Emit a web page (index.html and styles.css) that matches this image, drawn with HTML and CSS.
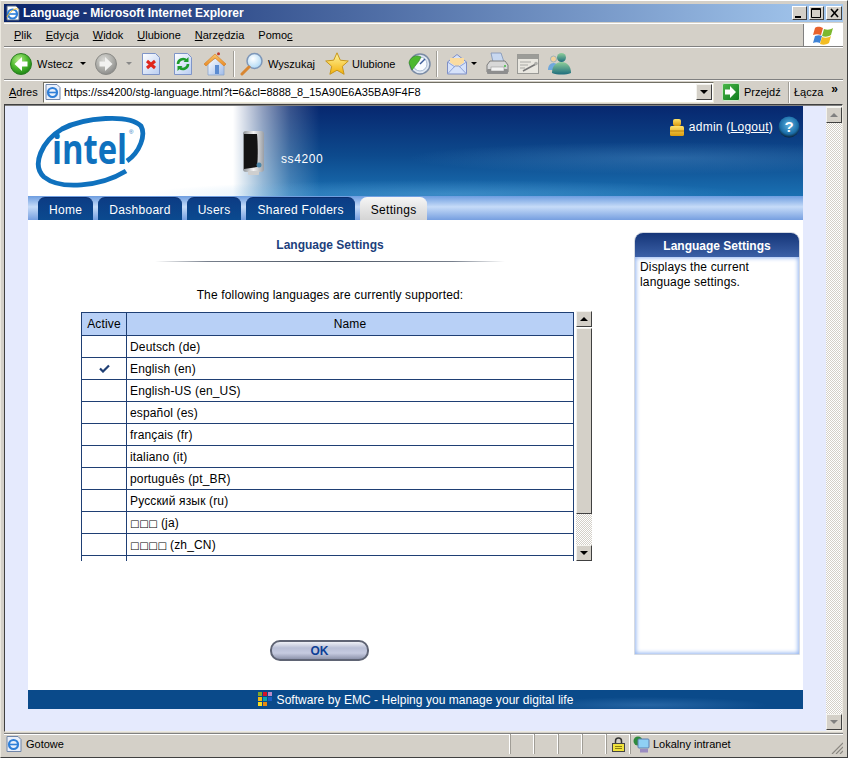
FILE: index.html
```html
<!DOCTYPE html>
<html lang="pl">
<head>
<meta charset="utf-8">
<title>Language - Microsoft Internet Explorer</title>
<link rel="stylesheet" href="styles.css">
</head>
<body>
<svg class="defs" aria-hidden="true">
  <defs>
    <radialGradient id="gGreen" cx=".4" cy=".3" r=".8"><stop offset="0" stop-color="#b6ec8a"/><stop offset=".5" stop-color="#4cb82e"/><stop offset="1" stop-color="#12780f"/></radialGradient>
    <radialGradient id="gGray" cx=".4" cy=".3" r=".8"><stop offset="0" stop-color="#d8d8d4"/><stop offset=".6" stop-color="#a8a8a4"/><stop offset="1" stop-color="#808080"/></radialGradient>
    <linearGradient id="gDoc" x1="0" y1="0" x2="1" y2="1"><stop offset="0" stop-color="#fff"/><stop offset="1" stop-color="#b9cdf2"/></linearGradient>
    <linearGradient id="gStar" x1="0" y1="0" x2="0" y2="1"><stop offset="0" stop-color="#fff6a0"/><stop offset="1" stop-color="#f3b10c"/></linearGradient>
    <linearGradient id="gRoof" x1="0" y1="0" x2="0" y2="1"><stop offset="0" stop-color="#f8c56c"/><stop offset="1" stop-color="#e98a25"/></linearGradient>
    <linearGradient id="gWall" x1="0" y1="0" x2="1" y2="1"><stop offset="0" stop-color="#fff"/><stop offset="1" stop-color="#9fbbe8"/></linearGradient>
    <radialGradient id="gLens" cx=".4" cy=".35" r=".7"><stop offset="0" stop-color="#fff"/><stop offset="1" stop-color="#a9d6f5"/></radialGradient>
    <radialGradient id="gHelp" cx=".5" cy=".4" r=".6"><stop offset="0" stop-color="#5fb4e2"/><stop offset=".72" stop-color="#1b6ea8"/><stop offset="1" stop-color="#0a2238"/></radialGradient>
    <linearGradient id="gGold" x1="0" y1="0" x2="0" y2="1"><stop offset="0" stop-color="#ffe36a"/><stop offset="1" stop-color="#d99a0c"/></linearGradient>
    <linearGradient id="gTeal" x1="0" y1="0" x2="0" y2="1"><stop offset="0" stop-color="#8fcf9a"/><stop offset="1" stop-color="#1e6d7d"/></linearGradient>
    <linearGradient id="gSilver" x1="0" y1="0" x2="1" y2="0"><stop offset="0" stop-color="#8a8f94"/><stop offset=".5" stop-color="#f4f4f4"/><stop offset="1" stop-color="#9a9ea4"/></linearGradient>
    <linearGradient id="gGo" x1="0" y1="0" x2="1" y2="1"><stop offset="0" stop-color="#4cb848"/><stop offset="1" stop-color="#0d7a1e"/></linearGradient>
  </defs>
</svg>

<div class="window">
  <div class="titlebar">
    <svg class="title-ie" viewBox="0 0 16 16" width="16" height="16"><path d="M2 1h9l3 3v11H2z" fill="#fff" stroke="#5a6a80"/><circle cx="7.500" cy="9" r="4.500" fill="none" stroke="#2f7fd8" stroke-width="2.200"/><path d="M4 9h7" stroke="#2f7fd8" stroke-width="1.600"/><path d="M2 12c3-6 8-9 11-8" fill="none" stroke="#f0b92e" stroke-width="1"/></svg>
    <span class="title-text">Language - Microsoft Internet Explorer</span>
    <div class="winbtns">
      <span class="winbtn"><svg viewBox="0 0 15 14" width="15" height="14"><rect x="3" y="10" width="6" height="2" fill="#000"/></svg></span>
      <span class="winbtn"><svg viewBox="0 0 15 14" width="15" height="14"><path d="M2.500 2.500h9V11.500h-9zM2.500 3.500h9" fill="none" stroke="#000"/></svg></span>
      <span class="winbtn winbtn-close"><svg viewBox="0 0 15 14" width="15" height="14"><path d="M4 3l7 8M11 3l-7 8" stroke="#000" stroke-width="1.600"/></svg></span>
    </div>
  </div>

  <div class="menubar">
    <nav class="menu">
      <span><u>P</u>lik</span><span><u>E</u>dycja</span><span><u>W</u>idok</span><span><u>U</u>lubione</span><span><u>N</u>arzędzia</span><span>Pomo<u>c</u></span>
    </nav>
    <div class="flagbox">
      <svg viewBox="0 0 22 20" width="22" height="20"><path d="M2 3c3-2 5-1 8 0l-2 7c-3-1-5-1-8 0z" fill="#e8622c"/><path d="M11 4c3 1 6 1 9-1l-2 7c-3 2-6 2-9 1z" fill="#7cb82e"/><path d="M0 11c3-1 5-1 7 0l-2 7c-2-1-5-1-7 0z" fill="#3f83d6" transform="translate(2 0)"/><path d="M9 12c3 1 6 1 9-1l-2 7c-3 2-6 2-9 1z" fill="#f3bd24"/></svg>
    </div>
  </div>

  <div class="toolbar">
    <svg class="ic22" viewBox="0 0 22 22"><circle cx="11" cy="11" r="10.500" fill="url(#gGreen)" stroke="#2b7d22"/><path d="M12 4L4.500 11l7.500 7v-4.500h5.500v-5H12z" fill="#fff"/></svg>
    <span class="tlabel ml5">Wstecz</span>
    <span class="caret ml7"></span>
    <svg class="ic22 ml9" viewBox="0 0 22 22"><circle cx="11" cy="11" r="10.500" fill="url(#gGray)" stroke="#8a8a86"/><path d="M10 4l7.500 7-7.500 7v-4.500H4.500v-5H10z" fill="#f2f2f0"/></svg>
    <span class="caret caret-off ml9"></span>
    <svg class="ic22 ml8" viewBox="0 0 22 22"><path d="M2.500 .5h13l4 4v17h-17z" fill="url(#gDoc)" stroke="#7f95c8"/><path d="M7 8l8 7M15 8l-8 7" stroke="#e0261c" stroke-width="3"/></svg>
    <svg class="ic22 ml10" viewBox="0 0 22 22"><path d="M2.500 .5h13l4 4v17h-17z" fill="url(#gDoc)" stroke="#7f95c8"/><path d="M6 11a5 5 0 0 1 8.500-3.500M16 11a5 5 0 0 1-8.500 3.500" fill="none" stroke="#1e9c2c" stroke-width="2.600"/><path d="M16.500 4v5h-5zM5.500 18v-5h5z" fill="#1e9c2c"/></svg>
    <svg class="ic24 ml9" viewBox="0 0 24 24"><path d="M5 11l8-5 8 5v12H5z" fill="url(#gWall)" stroke="#8aa4cc" stroke-width=".8"/><path d="M12 20v-7h4v9h-4z" fill="#5b8bd0"/><path d="M1 12L12 2l11 10-2 2-9-8-9 8z" fill="url(#gRoof)" stroke="#d27a20" stroke-width=".6"/><circle cx="15.500" cy="1.800" r="1.500" fill="#c0392b"/></svg>
    <span class="tsep ml6"></span>
    <svg class="ic24 ml5" viewBox="0 0 24 24"><circle cx="14.500" cy="9" r="7.500" fill="url(#gLens)" stroke="#7d96b8" stroke-width="1.500"/><path d="M9 15l-7 7" stroke="#d88632" stroke-width="3" stroke-linecap="round"/></svg>
    <span class="tlabel ml4">Wyszukaj</span>
    <svg class="ic24 ml10" viewBox="0 0 24 24"><path d="M12 .8l3.300 7.400 8 .8-6 5.300 1.800 8L12 18.200l-7.100 4.100 1.800-8-6-5.300 8-.8z" fill="url(#gStar)" stroke="#c7961c"/></svg>
    <span class="tlabel ml3">Ulubione</span>
    <svg class="ic24 ml12" viewBox="0 0 24 24"><circle cx="13" cy="12" r="10" fill="#dfe7f2" stroke="#7a8ba5" stroke-width="1.500"/><circle cx="13" cy="12" r="7" fill="#f8fbff" stroke="#a6b8d0"/><path d="M13 12l5-5" stroke="#3d5d99" stroke-width="1.500"/><path d="M2 11a8 8 0 0 1 12-6l-2 4-7 9z" fill="#4cb82e" stroke="#2b7d22" stroke-width=".6"/></svg>
    <span class="tsep ml5"></span>
    <svg class="ic22 ml8" viewBox="0 0 22 22"><path d="M1.500 9L11 1.500 20.500 9v12h-19z" fill="#d6e2fa" stroke="#7f8fc4"/><path d="M4 9.500V5h14v4.500L11 14z" fill="#fbdca0"/><path d="M1.500 21L9 13h4l7.500 8M1.500 9L9 14M20.500 9L13 14" fill="none" stroke="#8fa2d6"/></svg>
    <span class="caret ml3"></span>
    <svg class="ic24 ml8" viewBox="0 0 24 24"><path d="M6 1h10l3 9H8z" fill="#c8d8f0" stroke="#7f93b5" stroke-width=".8"/><path d="M2 13l3-4h15l3 4v7H2z" fill="#d8d8d8" stroke="#7d7d7d"/><rect x="2" y="17" width="21" height="5" rx="1" fill="#8e8e8e"/><rect x="6" y="15" width="13" height="4" fill="#f3f3f3" stroke="#8a8a8a" stroke-width=".5"/><circle cx="20" cy="14" r="1" fill="#3fbf3f"/></svg>
    <svg class="ic22 ml8" viewBox="0 0 22 22"><rect x=".5" y="1.500" width="21" height="19" fill="#e9e7e0" stroke="#9a9a96"/><rect x="1" y="2" width="20" height="4" fill="#9c9c98"/><path d="M3 9h11M3 12h8M3 15h5" stroke="#a8a8a4"/><path d="M6 18L19 11" stroke="#777" stroke-width="1.500"/><circle cx="19" cy="10.500" r="1.800" fill="#b0b0ac"/></svg>
    <svg class="ic24 ml8" viewBox="0 0 24 24"><circle cx="6.500" cy="7" r="3" fill="#f2d09c" stroke="#6f9fc0" stroke-width=".6"/><path d="M1 18c0-4 2-7 5.500-7s5 3 5 7z" fill="#6fa8dc"/><circle cx="14.500" cy="5.500" r="4.500" fill="url(#gTeal)"/><path d="M5 21c0-7 4-11 9.500-11S24 14 24 21c-5 2-14 2-19 0z" fill="url(#gTeal)"/></svg>
  </div>

  <div class="addressbar">
    <span class="addr-label"><u>A</u>dres</span>
    <div class="addr-box">
      <svg class="addr-ie" viewBox="0 0 16 16" width="16" height="16"><path d="M1 .5h11l3 3v12H1z" fill="#eaf0fb" stroke="#6f85a8"/><circle cx="7.500" cy="8.500" r="4.500" fill="none" stroke="#2f7fd8" stroke-width="2.200"/><path d="M4 8.500h7" stroke="#2f7fd8" stroke-width="1.600"/></svg>
      <span class="addr-url">https://ss4200/stg-language.html?t=6&amp;cl=8888_8_15A90E6A35BA9F4F8</span>
      <span class="sbtn addr-drop"><i class="arr-down"></i></span>
    </div>
    <svg class="go" viewBox="0 0 18 18" width="18" height="18"><rect x=".5" y=".5" width="17" height="17" rx="1.500" fill="url(#gGo)" stroke="#c8e6c4"/><path d="M8 3l6 6-6 6v-3.500H3v-5h5z" fill="#fff"/></svg>
    <span class="go-label">Przejdź</span>
    <span class="addr-sep"></span>
    <span class="links">Łącza</span>
    <span class="chev">»</span>
  </div>

  <div class="viewport">
    <div class="pagearea">
      <div class="page">
        <header class="hdr">
          <svg class="logo" viewBox="0 0 114 76" width="114" height="76">
            <path d="M92 57C66 73 26 76 10 63-3 51 8 27 28 15 51 3 95 0 107 12c5 9-1 26-14 35" fill="none" stroke="#0f71be" stroke-width="4.800"/>
            <text class="logo-text" transform="translate(18 50) scale(.78 1)">intel</text>
            <text class="logo-r" x="95" y="20">®</text>
          </svg>
          <svg class="device" viewBox="0 0 24 46" width="24" height="46"><rect x="1" y="1" width="21" height="41" rx="3" fill="url(#gSilver)"/><path d="M2 4h13c1 10 1 25 0 33l-13 2z" fill="#141414"/><circle cx="17" cy="35" r="2.500" fill="#4c86a8"/><rect x="6" y="41" width="11" height="4" rx="1" fill="#cfcfcf"/></svg>
          <span class="model">ss4200</span>
          <div class="user">
            <svg viewBox="0 0 14 17" width="14" height="17"><rect x="3" y="0" width="8" height="7" rx="2" fill="url(#gGold)"/><rect x="0" y="7" width="14" height="10" rx="1.500" fill="url(#gGold)"/><path d="M0 12h14" stroke="#b77d08"/></svg>
            <span class="user-text">admin (<u>Logout</u>)</span>
            <svg viewBox="0 0 22 22" width="22" height="22"><circle cx="11" cy="11" r="10.500" fill="url(#gHelp)"/><text class="help-q" x="11" y="16">?</text></svg>
          </div>
        </header>
        <nav class="tabs">
          <span class="tab">Home</span>
          <span class="tab">Dashboard</span>
          <span class="tab">Users</span>
          <span class="tab">Shared Folders</span>
          <span class="tab tab-active">Settings</span>
        </nav>
        <main class="main">
          <section class="content">
            <h1 class="heading">Language Settings</h1>
            <div class="rule"></div>
            <p class="intro">The following languages are currently supported:</p>
            <div class="listwrap">
              <div class="tableclip">
                <table class="langs">
                  <thead><tr><th class="col-a">Active</th><th>Name</th></tr></thead>
                  <tbody>
                    <tr><td></td><td>Deutsch (de)</td></tr>
                    <tr><td class="check"><svg viewBox="0 0 11 9" width="11" height="9"><path d="M1 4.500l3 3 6-6" fill="none" stroke="#1f3f74" stroke-width="2.200"/></svg></td><td>English (en)</td></tr>
                    <tr><td></td><td>English-US (en_US)</td></tr>
                    <tr><td></td><td>español (es)</td></tr>
                    <tr><td></td><td>français (fr)</td></tr>
                    <tr><td></td><td>italiano (it)</td></tr>
                    <tr><td></td><td>português (pt_BR)</td></tr>
                    <tr><td></td><td>Русский язык (ru)</td></tr>
                    <tr><td></td><td><span class="tofu">□□□</span> (ja)</td></tr>
                    <tr><td></td><td><span class="tofu">□□□□</span> (zh_CN)</td></tr>
                    <tr><td></td><td></td></tr>
                  </tbody>
                </table>
              </div>
              <div class="vscroll">
                <span class="sbtn"><i class="arr-up"></i></span>
                <span class="thumb"></span>
                <span class="track"></span>
                <span class="sbtn"><i class="arr-down"></i></span>
              </div>
            </div>
            <button class="okbtn" type="button">OK</button>
          </section>
          <aside class="panel">
            <h2 class="panel-head">Language Settings</h2>
            <p class="panel-body">Displays the current language settings.</p>
          </aside>
        </main>
        <footer class="foot">
          <svg viewBox="0 0 15 15" width="15" height="15"><rect x="0" y="0" width="4" height="4" fill="#7fa52a"/><rect x="5" y="0" width="4" height="4" fill="#d8122a"/><rect x="10" y="0" width="4" height="4" fill="#b98bc8"/><rect x="0" y="5" width="4" height="4" fill="#f2b90f"/><rect x="5" y="5" width="4" height="4" fill="#10a6a6"/><rect x="10" y="5" width="4" height="4" fill="#1a5cc0"/><rect x="0" y="10" width="4" height="4" fill="#f8de20"/><rect x="5" y="10" width="4" height="4" fill="#e88a10"/></svg>
          <span>Software by EMC - Helping you manage your digital life</span>
        </footer>
      </div>
    </div>
    <div class="pagescroll">
      <span class="sbtn"><i class="arr-up arr-off"></i></span>
      <span class="track"></span>
      <span class="sbtn"><i class="arr-down arr-off"></i></span>
    </div>
  </div>

  <div class="statusbar">
    <div class="st-main">
      <svg viewBox="0 0 16 16" width="16" height="16"><path d="M1 .5h11l3 3v12H1z" fill="#eaf0fb" stroke="#6f85a8"/><circle cx="7.500" cy="8.500" r="4.500" fill="none" stroke="#2f7fd8" stroke-width="2.200"/><path d="M4 8.500h7" stroke="#2f7fd8" stroke-width="1.600"/></svg>
      <span>Gotowe</span>
    </div>
    <span class="st-cell"></span><span class="st-cell"></span><span class="st-cell"></span><span class="st-cell"></span>
    <span class="st-cell st-lock"><svg viewBox="0 0 13 15" width="13" height="15"><path d="M3.500 7V4a3 3 0 0 1 6 0v3" fill="none" stroke="#333" stroke-width="1.500"/><rect x=".5" y="6.500" width="12" height="8" fill="#f0e23c" stroke="#444"/><path d="M3 9.500h7M3 11.500h7" stroke="#8a7f10"/></svg></span>
    <div class="st-zone">
      <svg viewBox="0 0 17 17" width="17" height="17"><circle cx="5" cy="5" r="4.500" fill="#2f8a3e"/><rect x="5" y="3" width="11" height="9" rx="1" fill="#8fd0f4" stroke="#5c7fb0"/><rect x="7" y="13" width="8" height="3.500" fill="#9a8cc0"/></svg>
      <span>Lokalny intranet</span>
      <svg class="grip" viewBox="0 0 12 12" width="12" height="12"><path d="M12 1L1 12M12 5l-7 7M12 9l-3 3" stroke="#8a8780" stroke-width="1.200"/></svg>
    </div>
  </div>
</div>
</body>
</html>
```
FILE: styles.css
```css
* { box-sizing: border-box; }
html, body { margin: 0; padding: 0; }
body { width: 848px; height: 758px; overflow: hidden; background: #d4d0c8; font-family: "Liberation Sans", Arial, sans-serif; font-size: 11px; color: #000; }
svg { display: block; flex: none; }
.defs { width: 0; height: 0; }

.window { width: 848px; height: 758px; padding: 4px 4px 3px 3px; display: flex; flex-direction: column; border-top: 1px solid #fff; border-bottom: 1px solid #404040; border-right: 1px solid #404040; border-left: 1px solid #ece9e0; }

.titlebar { height: 18px; flex: none; display: flex; align-items: center; padding-left: 1px; margin-top: -1px; background: linear-gradient(90deg, #0a246a 0%, #a6caf0 100%); }
.title-ie { margin-right: 2px; }
.title-text { font-size: 12px; font-weight: 700; color: #fff; white-space: nowrap; }
.winbtns { margin-left: auto; display: flex; gap: 2px; padding-right: 1px; }
.winbtn { width: 15px; height: 14px; background: #d4d0c8; border: 1px solid; border-color: #fff #404040 #404040 #fff; display: flex; align-items: center; justify-content: center; }
.winbtn-close { width: 16px; }
.winbtn svg { margin: -1px; }

.menubar { height: 24px; flex: none; display: flex; border-top: 1px solid #fff; border-bottom: 1px solid #808080; box-shadow: 0 1px 0 #fff; margin-top: 1px; }
.menu { display: flex; gap: 14px; align-items: center; padding-left: 10px; flex: 1; }
.menu span { white-space: nowrap; }
.flagbox { width: 40px; background: #fff; border-left: 1px solid #808080; display: flex; align-items: center; justify-content: center; }

.toolbar { height: 32px; flex: none; display: flex; align-items: center; padding-left: 6px; margin-top: 1px; border-bottom: 1px solid #808080; box-shadow: 0 1px 0 #fff; }
.ic22 { width: 22px; height: 22px; }
.ic24 { width: 24px; height: 24px; }
.tlabel { white-space: nowrap; }
.caret { width: 0; height: 0; border: 3px solid transparent; border-top: 3px solid #000; border-bottom: 0; flex: none; }
.caret-off { border-top-color: #888; }
.tsep { width: 2px; height: 26px; flex: none; background: #a09d96; border-right: 1px solid #fff; }
.ml3 { margin-left: 3px; } .ml4 { margin-left: 4px; } .ml5 { margin-left: 5px; } .ml6 { margin-left: 6px; } .ml7 { margin-left: 7px; } .ml8 { margin-left: 8px; } .ml9 { margin-left: 9px; } .ml10 { margin-left: 10px; } .ml12 { margin-left: 12px; }

.addressbar { height: 22px; flex: none; display: flex; align-items: center; margin-top: 1px; padding-left: 5px; }
.addr-label { width: 34px; }
.addr-box { width: 671px; height: 21px; background: #fff; display: flex; align-items: center; padding-left: 1px; padding-right: 1px; border: 1px solid; border-color: #716f64 #ece9d8 #ece9d8 #716f64; }
.addr-ie { margin-right: 3px; }
.addr-url { flex: 1; white-space: nowrap; }
.addr-drop { height: 17px; }
.go { margin-left: 8px; }
.go-label { margin-left: 4px; width: 44px; }
.addr-sep { width: 2px; height: 21px; background: #a09d96; border-right: 1px solid #fff; }
.links { margin-left: 4px; }
.chev { margin-left: 8px; font-weight: 700; font-size: 12px; margin-top: -6px; }

.viewport { flex: 1; min-height: 0; display: flex; margin-top: 1px; border: 1px solid; border-color: #404040 #ece9e0 #ece9e0 #404040; box-shadow: inset 0 1px 0 #808080; padding-top: 1px; }
.pagearea { flex: 1; background: #e5eafd; padding: 0 23px; }
.page { background: #fff; font-family: "Liberation Sans", Arial, sans-serif; font-size: 12px; letter-spacing: .15px; }

.hdr { height: 90px; display: flex; padding: 8px 3px 0 6px; background:
  radial-gradient(ellipse 260px 16px at 640px 52px, rgba(110,170,220,.28), transparent),
  radial-gradient(ellipse 300px 14px at 420px 88px, rgba(110,180,230,.4), transparent),
  linear-gradient(90deg, #fff 0, #fff 205px, rgba(255,255,255,.55) 235px, rgba(255,255,255,.2) 262px, rgba(255,255,255,0) 292px),
  linear-gradient(180deg, #07276f 0%, #0d4a8d 55%, #1a70b2 100%); }
.logo-text { font-family: "Open Sans", sans-serif; font-weight: 700; font-size: 42px; fill: #0f71be; letter-spacing: 0; }
.logo-r { font-family: "Liberation Sans", sans-serif; font-size: 6px; fill: #0f71be; letter-spacing: 0; }
.device { margin: 16px 0 0 94px; }
.model { color: #fff; margin: 38px 0 0 15px; letter-spacing: .6px; }
.user { margin-left: auto; display: flex; align-items: center; height: 24px; margin-top: 1px; color: #fff; letter-spacing: .25px; }
.user-text { margin: 0 5px; }
.help-q { font-family: "Liberation Sans", sans-serif; font-weight: 700; font-size: 15px; fill: #fff; text-anchor: middle; letter-spacing: 0; }

.tabs { height: 24px; display: flex; gap: 5px; padding: 1px 0 0 10px; background: linear-gradient(180deg, #6d9de0 0%, #c6dbf8 45%, #769fe0 100%); }
.tab { padding: 5px 11px 0; color: #fff; background: linear-gradient(180deg, #0c3c84 0%, #0b4a8f 100%); border-radius: 7px 7px 0 0; letter-spacing: .3px; white-space: nowrap; border-top: 1px solid #0a2d6c; }
.tab-active { color: #000; background: linear-gradient(180deg, #f4f4f4 0%, #d4d4d4 100%); border-top-color: #f4f4f4; }

.main { height: 470px; display: flex; }
.content { width: 604px; flex: none; }
.heading { margin: 18px 0 0; text-align: center; font-size: 12px; font-weight: 700; color: #1c3f7c; line-height: 14px; letter-spacing: 0; }
.rule { width: 350px; height: 1px; margin: 9px auto 0; background: linear-gradient(90deg, transparent 0, #777f8c 15%, #4a5462 50%, #777f8c 85%, transparent 100%); }
.intro { margin: 26px 0 0; text-align: center; line-height: 14px; }
.listwrap { display: flex; margin: 9px 0 0 53px; align-items: flex-start; }
.tableclip { width: 493px; height: 249px; margin-top: 1px; overflow: hidden; }
.langs { width: 493px; table-layout: fixed; border-collapse: collapse; }
.langs th { font-weight: 400; background: #b8d0f6; height: 23px; padding: 0; border: 1px solid #1f3f74; }
.langs .col-a { width: 45px; }
.langs td { height: 22px; padding: 0 0 0 3px; border: 1px solid #1f3f74; white-space: nowrap; }
.langs td.check { padding: 0; }
.check svg { margin: 0 auto; }
.tofu { font-family: "DejaVu Sans", sans-serif; font-size: 10px; letter-spacing: -.3px; color: #000; }
.vscroll { width: 16px; height: 250px; margin-left: 2px; display: flex; flex-direction: column; }
.sbtn { width: 16px; height: 16px; flex: none; background: #d4d0c8; border: 1px solid; border-color: #f4f3ee #404040 #404040 #f4f3ee; display: flex; align-items: center; justify-content: center; }
.thumb { height: 186px; flex: none; margin-top: 1px; background: #d4d0c8; border: 1px solid; border-color: #f4f3ee #404040 #404040 #f4f3ee; }
.track { flex: 1; background: conic-gradient(#d4d0c8 25%, #fff 0 50%, #d4d0c8 0 75%, #fff 0) 0 0 / 2px 2px; }
.arr-up, .arr-down { width: 0; height: 0; border-left: 4px solid transparent; border-right: 4px solid transparent; }
.arr-up { border-bottom: 4px solid #000; }
.arr-down { border-top: 4px solid #000; }
.arr-off.arr-up { border-bottom-color: #808080; }
.arr-off.arr-down { border-top-color: #808080; }
.okbtn { display: block; width: 99px; height: 21px; margin: 79px 0 0 242px; padding: 0; border: 2px solid #5f6474; border-radius: 10px; background: linear-gradient(180deg, #eef0f6 0%, #b9bfd6 35%, #c6cbe0 65%, #8e94ac 100%); font-family: "Liberation Sans", sans-serif; font-weight: 700; font-size: 12px; color: #0d3f96; }

.panel { width: 166px; height: 423px; margin: 12px 0 0 2px; flex: none; display: flex; flex-direction: column; border: 1px solid #d4d9e2; border-radius: 9px 9px 0 0; }
.panel-head { margin: 0; height: 24px; flex: none; border-radius: 8px 8px 0 0; background: linear-gradient(180deg, #153578 0%, #3b60a6 100%); color: #fff; font-size: 12px; font-weight: 700; text-align: center; line-height: 26px; letter-spacing: 0; }
.panel-body { margin: 0; flex: 1; padding: 3px 5px 0 5px; line-height: 15px; box-shadow: inset 0 0 4px 1px #8eb2f0; }

.foot { height: 19px; display: flex; align-items: center; justify-content: center; gap: 4px; color: #fff; letter-spacing: .05px; background: radial-gradient(ellipse 120px 8px at 620px 15px, rgba(90,150,210,.35), transparent), #0a4a8a; }

.pagescroll { width: 16px; flex: none; display: flex; flex-direction: column; padding: 1px 0; background: #f5f4f0; }

.statusbar { height: 21px; flex: none; display: flex; margin-top: 1px; border-top: 1px solid #808080; box-shadow: inset 0 1px 0 #fff; }
.st-main { width: 506px; flex: none; display: flex; align-items: center; gap: 4px; padding-left: 2px; border-right: 1px solid #fff; }
.st-cell { width: 24px; flex: none; border-left: 1px solid #a09d96; border-right: 1px solid #fff; display: flex; align-items: center; justify-content: center; }
.st-lock { width: 24px; }
.st-zone { flex: 1; display: flex; align-items: center; gap: 3px; padding-left: 2px; border-left: 1px solid #a09d96; }
.grip { margin-left: auto; align-self: flex-end; }
```
